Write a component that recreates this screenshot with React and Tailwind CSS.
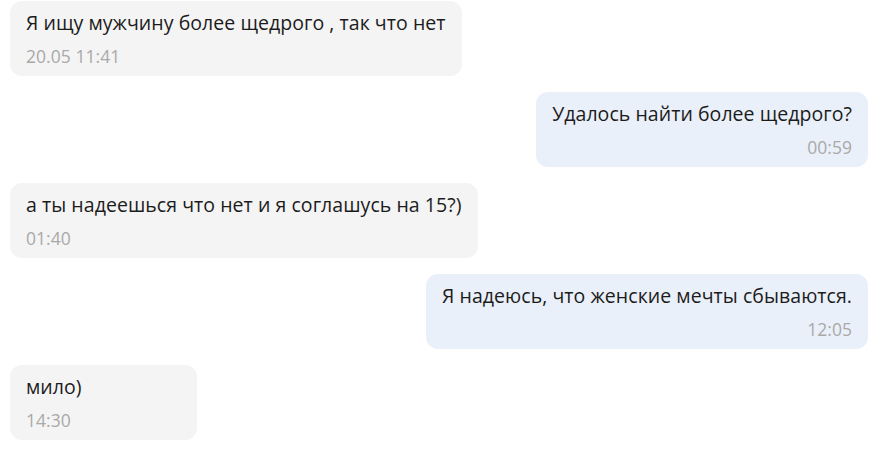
import React from 'react';

const MESSAGES = [
  { id: 1, mine: false, text: 'Я ищу мужчину более щедрого , так что нет', time: '20.05 11:41' },
  { id: 2, mine: true, text: 'Удалось найти более щедрого?', time: '00:59' },
  { id: 3, mine: false, text: 'а ты надеешься что нет и я соглашусь на 15?)', time: '01:40' },
  { id: 4, mine: true, text: 'Я надеюсь, что женские мечты сбываются.', time: '12:05' },
  { id: 5, mine: false, text: 'мило)', time: '14:30' },
];

function Bubble({ msg }) {
  return (
    <div className={`flex ${msg.mine ? 'justify-end' : 'justify-start'}`}>
      <div
        className={`min-w-[187px] rounded-[12px] px-4 pt-[9px] pb-[9px] tracking-[0.05px] ${
          msg.mine ? 'bg-[#eaf0f9] text-right' : 'bg-[#f4f4f4] text-left'
        }`}
      >
        <p className="text-[19.5px] leading-[26px] text-[#1c1c1c]">{msg.text}</p>
        <p className="mt-[9px] text-[17.5px] leading-[22px] text-[#a9a9a9]">{msg.time}</p>
      </div>
    </div>
  );
}

export default function App() {
  return (
    <div className="w-[883px] h-[458px] overflow-hidden bg-white pl-[10px] pr-[15px] pt-[1px] font-['Open_Sans','Lato',sans-serif]">
      <div className="flex flex-col gap-[16px]">
        {MESSAGES.map((m) => (
          <Bubble key={m.id} msg={m} />
        ))}
      </div>
    </div>
  );
}
